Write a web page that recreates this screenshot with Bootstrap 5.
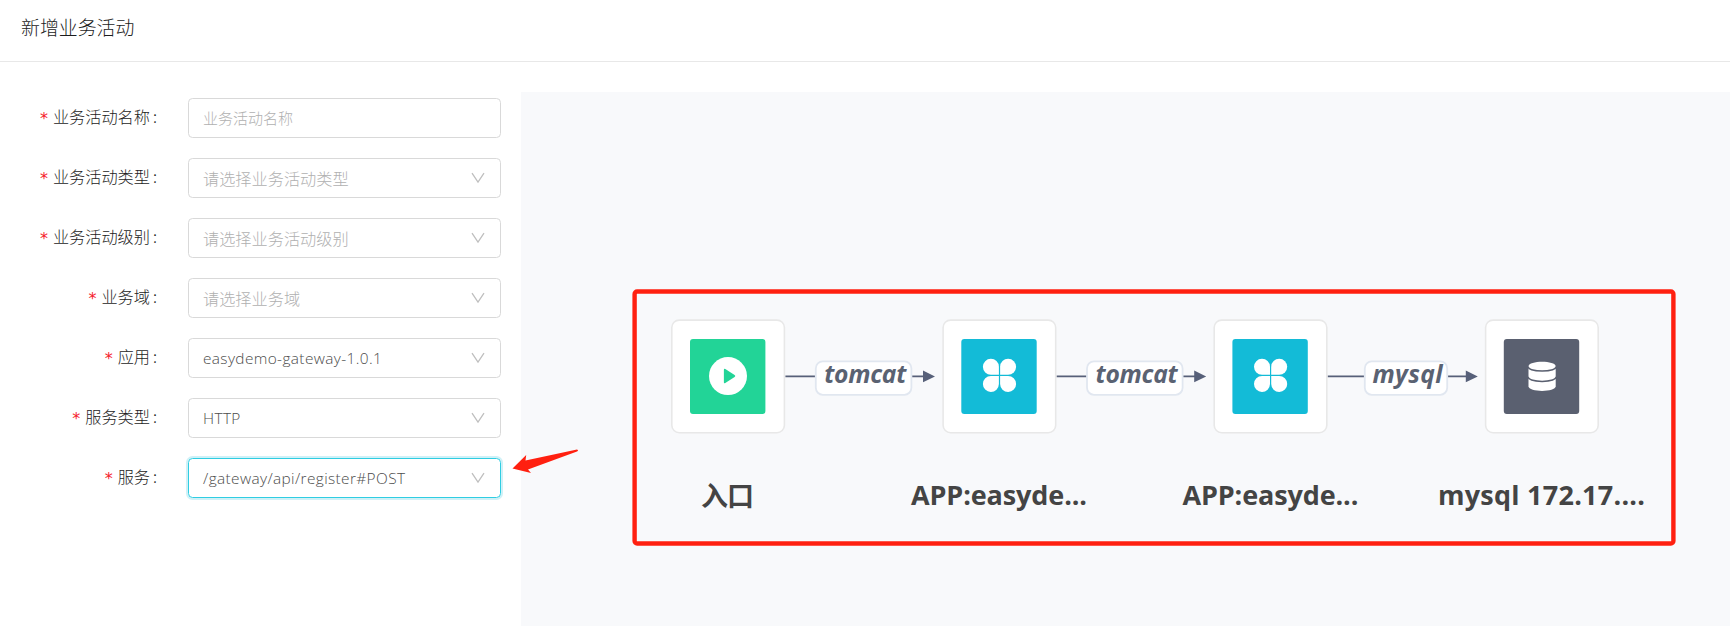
<!DOCTYPE html>
<html lang="zh-CN">
<head>
<meta charset="utf-8">
<meta name="viewport" content="width=device-width, initial-scale=1">
<title>新增业务活动</title>
<link href="https://cdn.jsdelivr.net/npm/bootstrap@5.3.0/dist/css/bootstrap.min.css" rel="stylesheet">
<style>
body{font-family:"Open Sans","Noto Sans CJK SC",sans-serif;font-size:16.2px;color:#1c1c1c;height:626px}
.page-head{height:62px;border-bottom:1px solid #e8e8e8;padding:0 0 8px 21px}
.page-head h1{font-size:18.9px;font-weight:300;line-height:28px;font-family:"Noto Sans CJK SC",sans-serif}
.form-pane{width:521px;padding:36px 20px 0 0}
.item-row{height:40px;margin-bottom:20px}
.item-label{width:158px;margin-right:30px;font-weight:300;font-family:"Noto Sans CJK SC",sans-serif;line-height:24px;margin-top:-4px}
.req{color:#f5222d;font-family:"DejaVu Sans",sans-serif;font-weight:400;font-size:16px;margin-right:5px;position:relative;top:3px}
.colon{width:8px;padding-left:3px}
.field{height:40px;width:313px;border:1px solid #d9d9d9;border-radius:4.5px;padding:0 15px 0 14px;font-size:16.2px;color:#4c4c4c;font-weight:300;box-shadow:none}
.field .hint,.field::placeholder{color:#b0b0b0}
.field::placeholder{opacity:1}
input.field{font-size:15px;padding-bottom:1px;font-family:"Noto Sans CJK SC",sans-serif}
.field .hint{font-family:"Noto Sans CJK SC",sans-serif;padding-top:1px}
.field .val{font-family:"Open Sans",sans-serif;font-size:15.4px;letter-spacing:.38px;white-space:nowrap;padding-top:2px}
.field.active{border-color:#2fcde2;box-shadow:0 0 0 2px rgba(17,187,213,.2)}
.canvas-pane{margin-top:30px;background:#f8f9fb}
.canvas-pane text{font-family:"Open Sans","Noto Sans CJK SC",sans-serif;font-weight:700}
.pointer{left:512px;top:449px}
</style>
</head>
<body class="d-flex flex-column overflow-hidden position-relative bg-white">
<header class="page-head d-flex align-items-center flex-shrink-0"><h1 class="m-0">新增业务活动</h1></header>
<main class="d-flex flex-grow-1">
  <form class="form-pane flex-shrink-0">
    <div class="item-row d-flex align-items-center"><label class="item-label d-flex justify-content-end"><span class="req">*</span>业务活动名称<span class="colon">:</span></label><input class="field form-control" placeholder="业务活动名称"></div>
    <div class="item-row d-flex align-items-center"><label class="item-label d-flex justify-content-end"><span class="req">*</span>业务活动类型<span class="colon">:</span></label><div class="field d-flex align-items-center justify-content-between"><span class="hint">请选择业务活动类型</span><svg width="14" height="12" viewBox="0 0 14 12" fill="none" stroke="#bfbfbf" stroke-width="1.3"><path d="M1 1.2 7 10 13 1.2"/></svg></div></div>
    <div class="item-row d-flex align-items-center"><label class="item-label d-flex justify-content-end"><span class="req">*</span>业务活动级别<span class="colon">:</span></label><div class="field d-flex align-items-center justify-content-between"><span class="hint">请选择业务活动级别</span><svg width="14" height="12" viewBox="0 0 14 12" fill="none" stroke="#bfbfbf" stroke-width="1.3"><path d="M1 1.2 7 10 13 1.2"/></svg></div></div>
    <div class="item-row d-flex align-items-center"><label class="item-label d-flex justify-content-end"><span class="req">*</span>业务域<span class="colon">:</span></label><div class="field d-flex align-items-center justify-content-between"><span class="hint">请选择业务域</span><svg width="14" height="12" viewBox="0 0 14 12" fill="none" stroke="#bfbfbf" stroke-width="1.3"><path d="M1 1.2 7 10 13 1.2"/></svg></div></div>
    <div class="item-row d-flex align-items-center"><label class="item-label d-flex justify-content-end"><span class="req">*</span>应用<span class="colon">:</span></label><div class="field d-flex align-items-center justify-content-between"><span class="val">easydemo-gateway-1.0.1</span><svg width="14" height="12" viewBox="0 0 14 12" fill="none" stroke="#bfbfbf" stroke-width="1.3"><path d="M1 1.2 7 10 13 1.2"/></svg></div></div>
    <div class="item-row d-flex align-items-center"><label class="item-label d-flex justify-content-end"><span class="req">*</span>服务类型<span class="colon">:</span></label><div class="field d-flex align-items-center justify-content-between"><span class="val">HTTP</span><svg width="14" height="12" viewBox="0 0 14 12" fill="none" stroke="#bfbfbf" stroke-width="1.3"><path d="M1 1.2 7 10 13 1.2"/></svg></div></div>
    <div class="item-row d-flex align-items-center"><label class="item-label d-flex justify-content-end"><span class="req">*</span>服务<span class="colon">:</span></label><div class="field active d-flex align-items-center justify-content-between"><span class="val">/gateway/api/register#POST</span><svg width="14" height="12" viewBox="0 0 14 12" fill="none" stroke="#bfbfbf" stroke-width="1.3"><path d="M1 1.2 7 10 13 1.2"/></svg></div></div>
  </form>
  <section class="canvas-pane flex-grow-1">
    <svg class="d-block" width="1209" height="534" viewBox="521 92 1209 534">
      <defs>
        <g id="frame"><rect x=".8" y=".8" width="112.6" height="112.6" rx="7.5" fill="#fff" stroke="#e8e8e8" stroke-width="1.6"/></g>
        <g id="app"><use href="#frame"/><rect x="19" y="19.6" width="75.4" height="75.2" rx="3" fill="#13bbd7"/>
          <g fill="#fff"><path d="M56.6 55.5V47.4a8 8 0 1 0-8 8.1z"/><path d="M57.8 55.5V47.4a8 8 0 1 1 8 8.1z"/><path d="M56.6 56.7v8.1a8 8 0 1 1-8-8.1z"/><path d="M57.8 56.7v8.1a8 8 0 1 0 8-8.1z"/></g></g>
      </defs>
      <rect x="634.6" y="291.5" width="1038.8" height="252" rx="2.5" fill="none" stroke="#ff2010" stroke-width="4.4"/>
      <g stroke="#576079" stroke-width="1.8"><path d="M785.3 376.4H925M1056.5 376.4H1196M1327.6 376.4H1468"/></g>
      <path d="M923 370.6 935 376.4 923 382.2zM1194.2 370.6 1206.2 376.4 1194.2 382.2zM1465.8 370.6 1477.8 376.4 1465.8 382.2z" fill="#576079"/>
      <g fill="#fff" stroke="#e1e7f0" stroke-width="1.8"><rect x="815.8" y="361.4" width="95.6" height="33.4" rx="7"/><rect x="1087" y="361.4" width="95.6" height="33.4" rx="7"/><rect x="1364.8" y="361.4" width="82.4" height="33.4" rx="7"/></g>
      <g fill="#5a6272" font-size="24.6" font-style="italic"><text x="824.3" y="383" textLength="82">tomcat</text><text x="1095.6" y="383" textLength="82">tomcat</text><text x="1372.5" y="383" textLength="70">mysql</text></g>
      <g transform="translate(671 319.3)"><use href="#frame"/><rect x="19" y="19.6" width="75.4" height="75.2" rx="3" fill="#22d497"/><circle cx="57" cy="56.8" r="19" fill="#fff"/><path d="M52.9 50.6v12.4q0 1.6 1.4.8l9.3-6q1.4-1 0-2l-9.3-6q-1.4-.8-1.4.8z" fill="#22d497"/></g>
      <use href="#app" x="942.3" y="319.3"/>
      <use href="#app" x="1213.4" y="319.3"/>
      <g transform="translate(1484.8 319.3)"><use href="#frame"/><rect x="19" y="19.6" width="75.4" height="75.2" rx="3" fill="#5a6070"/><path d="M43.7 47.2c0-6.2 27.2-6.2 27.2 0v19.8c0 6.2-27.2 6.2-27.2 0z" fill="#fff"/><path d="M43.2 47.3c1 6 27.2 6 28.2 0M43.2 57.6c1 6 27.2 6 28.2 0" fill="none" stroke="#5a6070" stroke-width="1.5"/></g>
      <g fill="#444" font-size="27"><text x="701" y="505.6" textLength="53">入口</text><text x="911" y="504.8" textLength="176">APP:easyde...</text><text x="1182.4" y="504.8" textLength="176">APP:easyde...</text><text x="1438" y="504.8" textLength="207">mysql 172.17....</text></g>
    </svg>
  </section>
</main>
<svg class="pointer position-absolute" width="68" height="26" viewBox="512 449 68 26"><path d="M512.5 468.5 526.2 455 525.5 460.5 577 449.5Q579 450.2 577 451.5L528 469.5 531 473z" fill="#ff2010"/></svg>
<script src="https://cdn.jsdelivr.net/npm/bootstrap@5.3.0/dist/js/bootstrap.bundle.min.js"></script>
</body>
</html>
